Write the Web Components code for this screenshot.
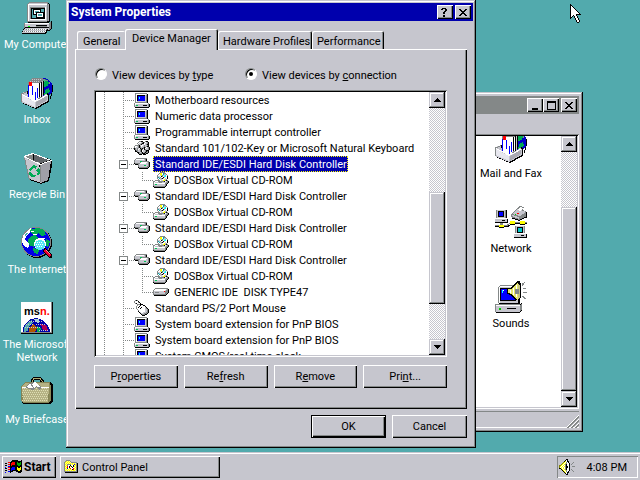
<!DOCTYPE html>
<html lang="en">
<head>
<meta charset="utf-8">
<title>Desktop</title>
<style>
:root{
  --face:#c6c6ce; --hi:#fff; --sh:#848888; --dk:#000; --navy:#0000ad; --teal:#52aaad;
  --raised:inset 1px 1px var(--hi),inset -1px -1px var(--dk),inset -2px -2px var(--sh);
  --frame:inset -1px -1px var(--dk),inset 1px 1px var(--face),inset -2px -2px var(--sh),inset 2px 2px var(--hi);
  --sunken:inset 1px 1px var(--sh),inset -1px -1px var(--hi),inset 2px 2px var(--dk),inset -2px -2px var(--face);
}
html,body{height:100%;margin:0}
body{font:11px/13px Roboto,"Liberation Sans",Arial,sans-serif;color:#000;overflow:hidden}
</style>
</head>
<body>
<desk-top>
  <desk-icons slot="icons">
    <desk-icon icon="mycomputer">My Computer</desk-icon>
    <desk-icon icon="inbox">Inbox</desk-icon>
    <desk-icon icon="bin">Recycle Bin</desk-icon>
    <desk-icon icon="internet">The Internet</desk-icon>
    <desk-icon icon="msn">The Microsoft Network</desk-icon>
    <desk-icon icon="briefcase">My Briefcase</desk-icon>
  </desk-icons>
  <folder-window slot="windows">
    <desk-icon icon="inbox">Mail and Fax</desk-icon>
    <desk-icon icon="network">Network</desk-icon>
    <desk-icon icon="sounds">Sounds</desk-icon>
  </folder-window>
  <props-dialog slot="windows" heading="System Properties">
    <tab-strip slot="tabs"></tab-strip>
    <view-choice></view-choice>
    <device-tree>
      <tree-item icon="pc">Motherboard resources</tree-item>
      <tree-item icon="pc">Numeric data processor</tree-item>
      <tree-item icon="pc">Programmable interrupt controller</tree-item>
      <tree-item icon="keys">Standard 101/102-Key or Microsoft Natural Keyboard</tree-item>
      <tree-item icon="drives" open selected>Standard IDE/ESDI Hard Disk Controller</tree-item>
      <tree-item icon="cd" child last>DOSBox Virtual CD-ROM</tree-item>
      <tree-item icon="drives" open>Standard IDE/ESDI Hard Disk Controller</tree-item>
      <tree-item icon="cd" child last>DOSBox Virtual CD-ROM</tree-item>
      <tree-item icon="drives" open>Standard IDE/ESDI Hard Disk Controller</tree-item>
      <tree-item icon="cd" child last>DOSBox Virtual CD-ROM</tree-item>
      <tree-item icon="drives" open>Standard IDE/ESDI Hard Disk Controller</tree-item>
      <tree-item icon="cd" child>DOSBox Virtual CD-ROM</tree-item>
      <tree-item icon="disk" child last>GENERIC IDE  DISK TYPE47</tree-item>
      <tree-item icon="mouse">Standard PS/2 Port Mouse</tree-item>
      <tree-item icon="pc">System board extension for PnP BIOS</tree-item>
      <tree-item icon="pc">System board extension for PnP BIOS</tree-item>
      <tree-item icon="pc">System CMOS/real time clock</tree-item>
    </device-tree>
    <button-row>
      <push-button>P<u>r</u>operties</push-button>
      <push-button>Re<u>f</u>resh</push-button>
      <push-button>R<u>e</u>move</push-button>
      <push-button>Pri<u>n</u>t...</push-button>
    </button-row>
    <push-button slot="actions" default>OK</push-button>
    <push-button slot="actions">Cancel</push-button>
  </props-dialog>
  <task-bar slot="taskbar"></task-bar>
  <px-icon slot="pointer" name="pointer" style="--w:12px;--h:19px"></px-icon>
</desk-top>

<script>
const r=(x,y,w,h,f)=>`<rect x="${x}" y="${y}" width="${w}" height="${h}" fill="${f}"/>`;
const p=(pts,f,s)=>`<polygon points="${pts}" fill="${f}"${s?` stroke="${s}"`:''}/>`;
const l=(d,s,w=1)=>`<path d="${d}" fill="none" stroke="${s}" stroke-width="${w}"/>`;
const dash=(d,s)=>`<path d="${d}" fill="none" stroke="${s}" stroke-dasharray="1 1"/>`;
const G='#848888',F='#c6c6ce',W='#fff',K='#000',B='#00f',N='#e7e7ef';
const land='#00aa55';

// Pixel grids: one character per pixel.
const INK={K:K,W:W,G:G,F:F,B:B,N:'#00008c',Y:'#ff0',P:'#ffff84',g:'#00c655',C:'#00ffff',R:'#f00',T:'#00aaad',O:'#848400'};
const grid=rows=>rows.map((row,y)=>[...row].map((c,x)=>INK[c]?r(x,y,1,1,INK[c]):'').join('')).join('');

const tray=`<circle cx="22" cy="11" r="10" fill="#0000c6"/>
${p('15,3 19,1 24,2 28,6 27,9 23,10 22,14 19,11 17,9',land)}${p('24,13 28,11 29,14 26,19 23,20',land)}
${p('19,3 24,2 25,4 21,6','#55aa88')}${l('M31.5 8V15M30.5 16V19M29.5 19V22','#000')}
${l('M19.5 2.5H24M25 3.5H27M28.5 5V7','#848888')}
${p('7,5 11,2 22,2 22,23 7,24',G)}${p('8,6 17,6 17,24 8,24',W)}
${p('11,1 22,1 19,6 7,6',G)}${dash('M9 4.5H19M11 2.5H21',F)}
${l('M11.5 18V9M14.5 23V15M16.5 21V11',B)}${r(8,5,3,4,'#f00')}${r(7,8,1,14,B)}
${l('M18.5 6V20M20.5 5V20M22.5 4V18',K)}${l('M17.5 6V21M19.5 6V20',W)}${l('M21.5 4V19',F)}
${p('1,16 7,14 7,20 15,25 27,16 28,18 28,25 15,32 1,26',K)}
${p('0,16 6,14 7,20 15,24 25,17 27,18 27,24 14,31 0,25',F)}
${p('1,18 14,25 14,30 1,24',N)}${p('15,25 26,19 26,23 15,30','#a8a8b0')}
${l('M1 17.5L14.5 24.5L26 18',W)}${l('M.5 16V25',G)}${l('M1 17L6 14.5',G)}`;

const ICONS={
pointer:{v:'0 0 12 19',s:grid(['K','KK','KWK','KWWK','KWWWK','KWWWWK','KWWWWWK','KWWWWWWK','KWWWWWWWK','KWWWWWWWWK','KWWWWWKKKKK','KWWKWWK','KWK KWWK','KK  KWWK','K    KWWK','     KWWK','      KWWK','      KWWK','       KK'])},
pc:{v:'0 0 16 16',s:grid(['',
' GGGGGGGGGGGG',' GWWWWWWWWWWFK',' GWKKKKKKKKFGK',' GWKBBBBBBBFGK',' GWKBCBBBBBFGK',' GWKBCBBBBBFGK',' GWKBBBBBBBFGK',' GWKBBBBBBBFGK',' GWFFFFFFFFFGK',' GGGGGGGGGGGGK','GWWWWWWWWWWWWWG','GWFFFFFFFFFFFFGK','GFggFFFFFKKKKFGK','GFFFFFFFFFFFFFGK',' KKKKKKKKKKKKKK'])},
keys:{v:'0 0 16 16',s:grid([
'','     GGKK  GKK','    GWWFGKGWFGK','   GWFFGKKWFFGK','    GFGKFFWFGKK',' GGGGKFWWFGFFGK','GWWFGKGWFFGFGKK','GWFFGKGFFGKGWFGK','KGFGFWKGKGKWFFGK','KGFGWFGKGWKGFFGK',' KGGFFGKWFFGKKK',' KKGFFGKWFFGKGK','   KKGFGKFGKGGK','    KGGGKKKGKK','     KKK KKK',''])},
drives:{v:'0 0 16 16',s:grid([
'','','  GGGGGGGGGGG',' GWWWWWWWWFGK','GFFFFFFFFFFGK','GFFFFFggGGGGGGG','GFFFFFGWWWWWWFGK','KGGGGGWWWWWWFFGK',' KKKGFFFFFFFFFGK','    GFFFFFggFFGK','    GFFFFFFFFGGK','    KGGGGGGGGGK','     KKKKKKKKK','','',''])},
cd:{v:'0 0 16 16',s:grid([
'       GGGGG','      GYYWTGG','     GWYYWTFFG','    GWWFYTFFCWG','    GFFWKGWCCWK','    GTFGWWKFWWK','    GWTFGKFWFWK','     GWFFWWYFG','  GGGGGWFFYYGKG','GGWWWGGGGGGKWFGK','GWFFFFGGGFFFFGGK','GWWWWWWWWWWWGGK','GFggFFFFFFFFGK','GFFFFFFFFFFFGK','KGGGGGGGGGGGK',' KKKKKKKKKKK'])},
disk:{v:'0 0 16 16',s:grid([
'','','','','  GGGGGGGGGGGGG',' GWWWWWWWWWWWFGK','GWWWWWWWWWWWFGGK','GFFFFFFFFFFRGGGK','GFGGGGFFFFFFGGGK','GFFFFFFFFFFFGGK','GGGGGGGGGGGGGK',' KKKKKKKKKKKK','','','',''])},
mouse:{v:'0 0 16 16',s:grid([
' GKG','G   K','G   GK',' GK   K','   GGGKKK','   GWWKWWKK','  GWWKWWWWWK','  GWKWWKWWWFK','  GWWWKWWWWFGK','   GWWWWWWWFFGK','    GWWWWWWFFGK','    KWWWWWWFFGK','     KFWWFFFGGK','      KFFFGGGK','       KGGGKK','        KKK'])},
folder:{v:'0 0 16 14',s:grid([
'  GGGG',' GYPYPG','GYPYPYPGGGGGG','GPYPYPYPYPYPGK','GYPGGGGPYPBYGK','GPYGWWKWWKPYGK','GYPRWKYKWKYPGK','GPYRWKWWKWPYGK','GYPBWYRWWRYPGK','GPYPYPYPKRPYGK','GYPYPYPYPYYPGK','GGGGGGGGGGGGGK',' KKKKKKKKKKKKK'])},
speaker:{v:'0 0 17 17',s:grid([
'       KK','      KWK','     KYWKK','    OYWGWK    G','   OYWYGWWK  G','  OYWYGKWWK G','OOYWYWGKWWK','OYWYWYGKKWK  GGG','OWYWYWGKKWK','KKYWYWGKWWK','  KYWYGKWWK G','   KYWYGWWK  G','    KYWGWK    G','     KYWKK','      KWK','       KK'])},
start:{v:'0 0 18 16',s:`${[4,6,9,11].map(y=>r(0,y,2,1,K)+r(3,y-1,2,1,'#f00')+r(0,y+2,1,1,B)+r(3,y+1,2,1,B)).join('')}
${p('5,3 8,1 12,1 14,2 17,1 17,13 14,14 12,13 9,12 5,14',K)}
${p('6,4 8,3 10,3 10,6 8,6 6,7','#f00')}${p('12,3 14,4 16,3 16,6 14,7 12,6','#00aa00')}
${p('6,9 8,8 10,8 10,11 8,11 6,12',B)}${p('12,8 14,9 16,8 16,11 14,12 12,11','#ff0')}`},
mycomputer:{v:'0 0 32 32',s:`${p('7,1 27,1 29,3 29,19 27,21 7,21',K)}${p('6,2 8,0 27,0 28,3 27,19 24,20 6,20',G)}
${p('7,2 26,2 26,19 7,19',F)}${l('M7 2.5H26M7.5 2V19',W)}${l('M8 .5H26',G)}${r(8,1,18,1,F)}${r(27,2,1,17,'#a8a8b0')}
${r(9,5,15,12,G)}${r(10,6,14,11,K)}${r(11,7,12,9,'#52aaad')}${r(12,7,8,6,K)}${r(13,8,6,4,W)}${r(14,9,4,2,'#52aaad')}${r(15,10,8,6,K)}${r(16,11,6,4,W)}${r(17,12,4,2,'#52aaad')}
${r(24,5,1,12,W)}${r(9,17,16,1,W)}
${p('5,21 28,21 31,19 31,26 28,29 4,29',K)}${r(3,21,1,7,G)}${r(4,21,24,7,F)}${r(4,21,24,1,W)}${p('28,21 30,19 30,26 28,28',G)}
${r(7,24,2,1,'#00ff00')}${r(15,23,11,1,K)}${r(15,24,11,1,G)}
${p('4,25 28,25 25,32 1,32 1,30',K)}${p('4,26 27,26 24,31 1,31',F)}
${r(5,27,21,1,W)}${dash('M5 27.5H26',G)}
${r(3,29,22,1,W)}${dash('M3 29.5H25',G)}${l('M1 31.5H24',K)}${l('M2 30.5H24',F)}`},
inbox:{v:'0 0 32 32',s:tray},
bin:{v:'0 0 32 32',s:`${p('3,4 12,1 31,8 31,13 28,29 20,32 8,28',K)}
${p('3,5 18,10 20,31 8,27',F)}${p('19,12 30,9 27,28 20,31','#a0a0a8')}
${p('3,4 12,1 12,8 8,8','#848888')}${p('12,1 29,8 20,11 12,9','#606468')}
${l('M3 4.5L19.5 12.5L30 8.5L12 1.5L3 4.5',W)}${l('M12.5 2V8',K)}${l('M3.5 6L8.5 28M19.5 13V30',G)}
${p('9,16 12,13 16,14 15,17 12,16 10,19 8,18','#00aa55')}${p('17,16 19,18 19,22 16,23 17,20 15,19','#00aa55')}${p('8,20 10,20 12,23 15,23 14,25 10,25 8,23','#00aa55')}`},
internet:{v:'0 0 32 32',s:`<circle cx="16" cy="16" r="15" fill="#000"/><circle cx="15" cy="15" r="15" fill="${G}"/><circle cx="15" cy="15" r="14" fill="#0000e7"/>
${p('2,8 8,2 10,1 9,5 5,9 4,13 9,16 7,21 2,18 1,14',W)}${p('4,7 6,5 7,7 4,9','#52aaad')}${p('10,2 18,1 23,3 25,8 20,9 18,6 12,8 9,5','#00aa55')}
${p('10,9 14,8 18,12 14,16 13,20 8,18 7,13','#00aa55')}${p('12,21 18,23 17,27 13,26','#00aa55')}${p('25,12 29,14 27,21 24,17','#00aa55')}
${l('M10 4.5H13M12 7.5H16M20 11.5H24',W)}${p('24,20 31,28 31,31 28,31 22,24','#000')}${p('24,22 30,28 28,30 23,25','#e70031')}${l('M25 23L29 27','#ff8c9c')}
<circle cx="19" cy="17" r="6" fill="#fff"/><circle cx="19" cy="18" r="5" fill="#55e7f7"/>${dash('M16 15.5H22M15 17.5H23M16 19.5H22','#fff')}`},
msn:{v:'0 0 32 32',s:`${r(0,0,32,32,K)}${r(0,0,31,31,G)}${r(0,0,30,30,W)}
<path d="M2 30V26L5 21L10 17L16 16L21 18L26 22L29 28V30Z" fill="#0000ad"/>${p('3,26 6,21 11,18 12,21 8,24 7,29 3,30','#52aaad')}
${p('13,17 18,17 19,20 16,21','#aad6d6')}${p('8,26 12,22 16,26 14,30 8,30','#ad5500')}${p('20,22 26,24 27,29 22,28','#ad0055')}${p('16,24 20,26 19,30 16,30','#00aa55')}
${dash('M5 22.5H12M8 19.5H22M4 25.5H20M15 22.5H25M18 28.5H28',F)}
<text x="3" y="13" font-family="Liberation Sans,Arial,sans-serif" font-weight="700" font-size="11" fill="#000">ms<tspan fill="#f00">n.</tspan></text>`},
briefcase:{v:'0 0 32 32',s:`${l('M11 6V4L13 1.5H19L21 4V7',K,3)}${l('M11 6V4L13 1.5H19L21 4V7','#adaa73',1)}
${p('1,9 4,5 29,5 32,8 32,24 29,27 2,27 1,25',K)}${p('0,10 4,5 29,5 29,24 27,26 2,26 0,24','#848455')}
${p('1,10 4,6 28,6 28,9 27,25 2,25','#b5b284')}${r(28,8,2,16,'#8c8a5a')}
${Array.from({length:7},(_,i)=>dash(`M${1+i%2} ${11.5+i*2}H27`,'#dedeb5')).join('')}
${p('4,10 8,6 13,5 21,10 18,13 15,10 12,13 8,12',G)}${p('5,10 9,6 12,11 8,11',W)}${p('11,7 14,5 20,10 17,10 15,9 13,11',W)}${l('M1 10.5H5M20 10.5H28',W)}`},
network:{v:'0 0 32 32',s:`
${r(1,4,11,9,K)}${r(1,3,10,9,G)}${r(2,4,8,8,F)}${r(1,3,10,1,W)}${r(3,5,6,6,K)}${r(4,6,4,4,'#0000ff')}${r(0,13,13,4,K)}${r(0,12,12,4,F)}${r(0,12,12,1,W)}${r(7,14,3,1,K)}
${p('16,8 22,2 25,0 29,1 28,4 32,6 31,11 24,14 16,11',G)}${p('17,8 22,3 31,6 25,10','#c6c6ce')}${p('22,4 25,1 28,2 26,5',W)}${p('17,9 24,11 24,13 17,10',F)}${p('25,11 31,7 31,10 25,13',G)}${l('M17 12L24 14.5L31.5 11V6',K)}${r(22,7,2,1,'#f00')}${r(20,8,1,1,'#0c0')}
${l('M0 20.5H13L17 17.5H32',K)}${l('M0 19.5H12L16 16.5H32',G)}
${r(5,17,3,2,G)}${r(4,19,5,2,'#ff0')}${r(4,21,5,1,K)}${r(15,15,5,3,'#ff0')}${r(15,18,5,1,K)}${r(25,15,5,3,'#ff0')}${r(25,18,5,1,K)}
${r(20,20,10,9,K)}${r(20,19,10,9,G)}${r(21,20,8,8,F)}${r(20,19,10,1,W)}${r(22,21,6,6,K)}${r(23,22,4,4,'#00c6c6')}${r(19,28,13,4,K)}${r(19,27,12,4,F)}${r(19,27,12,1,W)}${r(26,29,3,1,K)}`},
sounds:{v:'0 0 32 32',s:`${p('4,5 24,5 25,7 25,23 4,23',K)}${p('3,6 5,4 23,4 24,6 23,22 3,22',G)}${r(4,6,19,16,F)}${l('M4.5 6V22M5 5.5H22',W)}
${r(5,7,16,13,K)}${r(6,8,14,11,'#0000ff')}${r(7,9,1,3,'#00ffff')}${r(8,9,1,1,W)}
${p('1,24 24,24 27,21 27,29 24,32 1,32',K)}${r(0,23,25,8,G)}${r(1,24,24,7,F)}${r(1,24,24,1,W)}${p('25,24 27,22 27,28 25,30',G)}${r(4,27,2,2,'#0c0')}${r(12,27,9,1,K)}
${p('12,8 15,7 22,0 25,0 26,4 26,16 24,20 21,19 15,14 12,13',K)}${p('13,8 16,8 23,1 23,19 16,13 13,12','#e7e768')}${l('M15 9V12M18 7V14M21 4V16','#fff')}${p('23,2 25,5 25,16 23,19','#c6c384')}${r(20,8,4,5,G)}
${l('M27 5L30 1M28 7.5H31M28 11.5H32M27 15L31 18M27 4L28 2',G)}`},
help:{v:'0 0 8 9',s:grid([' KKKK','KK  KK','    KK','   KK','  KK','  KK','','  KK','  KK'])},
close:{v:'0 0 8 7',s:grid(['KK    KK',' KK  KK','  KKKK','   KK','  KKKK',' KK  KK','KK    KK'])},
min:{v:'0 0 9 9',s:r(1,7,6,2,K)},
max:{v:'0 0 9 9',s:r(0,0,9,9,K)+r(1,2,7,6,F)},
up:{v:'0 0 7 4',s:grid(['   K','  KKK',' KKKKK','KKKKKKK'])},
down:{v:'0 0 7 4',s:grid(['KKKKKKK',' KKKKK','  KKK','   K'])},
grip:{v:'0 0 13 13',s:[0,4,8].map(n=>l(`M${n} 13L13 ${n}`,W)+l(`M${n+1} 13.5L13.5 ${n+1}`,G,2)).join('')}
};

function define(name,html,setup){
  const t=document.createElement('template');
  t.innerHTML=`<style>*{box-sizing:border-box}button{font:inherit;color:inherit;border:0;padding:0;margin:0;background:none}u{text-underline-offset:1px}</style>`+html;
  customElements.define(name,class extends HTMLElement{
    constructor(){super();this.attachShadow({mode:'open'}).append(t.content.cloneNode(true))}
    connectedCallback(){setup&&setup(this,this.shadowRoot)}
  });
}

define('px-icon',`<style>:host{display:block;flex:none;width:var(--w);height:var(--h)}svg{display:block;width:100%;height:100%;overflow:hidden}</style>`,
(el,s)=>{const i=ICONS[el.getAttribute('name')];if(!i||s.querySelector('svg'))return;const t=document.createElement('template');
t.innerHTML=`<svg viewBox="${i.v}" shape-rendering="crispEdges" aria-hidden="true">${i.s}</svg>`;s.append(t.content)});

define('desk-icon',`<style>:host{display:block}button{display:flex;flex-direction:column;align-items:center;gap:4px;width:100%;text-align:center}
px-icon{--w:32px;--h:32px}</style><button type="button"><px-icon></px-icon><span><slot></slot></span></button>`,
(el,s)=>{const i=document.createElement('px-icon');i.setAttribute('name',el.getAttribute('icon'));s.querySelector('px-icon').replaceWith(i)});

define('desk-icons',`<style>:host{display:grid;grid-template-columns:74px;grid-auto-rows:75px;align-content:start;padding-top:2px;color:#fff}</style><slot></slot>`);

define('desk-top',`<style>:host{display:grid;grid-template-rows:1fr auto;height:100%;background:var(--teal);position:relative;overflow:hidden}
main{min-height:0}::slotted(px-icon){position:absolute;left:570px;top:4px}</style>
<main><slot name="icons"></slot><slot name="windows"></slot></main><slot name="taskbar"></slot><slot name="pointer"></slot>`);

define('title-bar',`<style>:host{display:flex;align-items:center;gap:2px;height:18px;padding:0 2px;background:var(--bar,var(--navy));color:#fff;font-size:12px;font-weight:700}
span{flex:1}button{display:grid;place-items:center;width:16px;height:14px;background:var(--face);box-shadow:var(--raised)}
div{display:flex}.a{--w:8px;--h:9px}.x{--w:8px;--h:7px}.m{--w:9px;--h:9px}:host([folder]) .help,:host(:not([folder])) .size{display:none}</style>
<span></span><button class="help" aria-label="Help"><px-icon class="a" name="help"></px-icon></button>
<div class="size"><button aria-label="Minimize"><px-icon class="m" name="min"></px-icon></button><button aria-label="Maximize"><px-icon class="m" name="max"></px-icon></button></div>
<button aria-label="Close"><px-icon class="x" name="close"></px-icon></button>`,
(el,s)=>{s.querySelector('span').textContent=el.getAttribute('heading')||''});

define('scroll-bar',`<style>:host{display:flex;flex-direction:column;flex:none;width:16px;background:conic-gradient(var(--face) 25%,#fff 0 50%,var(--face) 0 75%,#fff 0) 0 0/2px 2px}
button{display:grid;place-items:center;height:16px}button,.thumb{flex:none;background:var(--face);box-shadow:var(--frame)}
px-icon{--w:7px;--h:4px}.before{flex:var(--before)}.thumb{flex:var(--thumb)}.after{flex:var(--after)}</style>
<button aria-label="Scroll up"><px-icon name="up"></px-icon></button><div class="before"></div><div class="thumb"></div><div class="after"></div>
<button aria-label="Scroll down"><px-icon name="down"></px-icon></button>`);

define('folder-window',`<style>:host{position:absolute;left:183px;top:92px;width:400px;height:340px;display:flex;flex-direction:column;padding:4px;background:var(--face);box-shadow:var(--frame)}
:host{box-sizing:border-box}title-bar{--bar:var(--sh)}.menu{height:20px}
.view{flex:1;min-height:0;display:flex;padding:2px;background:#fff;box-shadow:var(--sunken)}
.items{flex:1;min-width:0;overflow:hidden;display:grid;grid-template-columns:76px;grid-auto-rows:75px;justify-content:end;padding-right:12px}
.items slot{display:block;margin-top:-5px}.items ::slotted(*){height:75px}
scroll-bar{--before:55;--thumb:183;--after:0}
.status{display:flex;justify-content:flex-end;align-items:flex-end;height:17px;margin-top:2px;box-shadow:inset 1px 1px var(--sh),inset 0 -1px #fff}px-icon{--w:13px;--h:13px}</style>
<title-bar folder></title-bar><div class="menu"></div>
<div class="view"><div class="items"><slot></slot></div><scroll-bar></scroll-bar></div>
<div class="status"><px-icon name="grip"></px-icon></div>`);

define('props-dialog',`<style>:host{position:absolute;left:66px;top:0;width:410px;box-sizing:border-box;padding:3px;background:var(--face);box-shadow:var(--frame)}
.body{padding:8px 6px 7px}.panel{display:flex;flex-direction:column;gap:8px;padding:17px 20px 21px 19px;box-shadow:var(--raised)}
.actions{display:flex;justify-content:flex-end;gap:6px;margin-top:6px}::slotted([slot=actions]){width:75px}</style>
<title-bar></title-bar><div class="body"><slot name="tabs"></slot><div class="panel"><slot></slot></div><div class="actions"><slot name="actions"></slot></div></div>`,
(el,s)=>{const t=document.createElement('title-bar');t.setAttribute('heading',el.getAttribute('heading'));s.querySelector('title-bar').replaceWith(t)});

define('tab-strip',`<style>:host{display:flex;align-items:flex-end;height:20px;padding-left:2px}
button{height:18px;padding:2px 4px 0 5px;text-align:left;white-space:nowrap;background:var(--face);border-radius:2px 2px 0 0;box-shadow:inset 1px 1px #fff,inset -1px 0 #000,inset -2px 0 var(--sh)}
.g{width:48px;padding-left:6px;box-shadow:inset 1px 1px #fff}.h{width:94px}.p{width:72px}
[aria-selected=true]{width:93px;height:21px;margin-bottom:-1px;padding:0 5px 2px 7px;position:relative}</style>
<button role="tab" class="g">General</button><button role="tab" aria-selected="true">Device Manager</button><button role="tab" class="h">Hardware Profiles</button><button role="tab" class="p">Performance</button>`);

define('view-choice',`<style>:host{display:grid;grid-template-columns:150px 1fr;height:16px;padding-left:1px}label{display:flex;align-items:center;gap:5px}
input{appearance:none;flex:none;display:grid;place-items:center;width:12px;height:12px;margin:0;border-radius:50%;background:#fff;border:1px solid;border-color:#848888 #fff #fff #848888;box-shadow:inset 1px 1px #000}
input:checked::before{content:"";width:4px;height:4px;border-radius:50%;background:#000}span{padding-top:2px}</style>
<label><input type="radio" name="v"><span>View devices by <u>t</u>ype</span></label><label><input type="radio" name="v" checked><span>View devices by <u>c</u>onnection</span></label>`);

define('device-tree',`<style>:host{display:flex;height:267px;box-sizing:border-box;padding:2px;background:#fff;box-shadow:var(--sunken)}
div{flex:1;overflow:hidden}scroll-bar{--before:84;--thumb:112;--after:35}</style><div role="tree"><slot></slot></div><scroll-bar></scroll-bar>`);

define('tree-item',`<style>:host{display:flex;height:16px;line-height:18px;--v:repeating-linear-gradient(to bottom,var(--sh) 0 1px,transparent 1px 2px);--x:repeating-linear-gradient(to right,var(--sh) 0 1px,transparent 1px 2px)}
i{flex:none;width:19px;background:var(--v) 8px 0/1px 100% no-repeat}
.b,.c{background:var(--v) 8px 0/1px 100% no-repeat,var(--x) 8px 8px/11px 1px no-repeat}
:host([child]) .b{background:var(--v) 8px 0/1px 100% no-repeat}
:host([last]) .c{background:var(--v) 8px 0/1px 8px no-repeat,var(--x) 8px 8px/11px 1px no-repeat}
:host(:not([child])) .c{display:none}
:host([open]) .b{display:grid;padding:4px 0 0 4px}
:host([open]) .b::before{content:"";width:9px;height:9px;background:linear-gradient(#000,#000) 50% 50%/5px 1px no-repeat,#fff;border:1px solid var(--sh);box-sizing:border-box}
px-icon{--w:16px;--h:16px;margin-right:3px}span{height:16px;padding:0 1px 0 2px;white-space:pre}
:host([selected]) span{background:var(--navy);color:#fff;outline:1px dotted #ff0;outline-offset:-1px}</style>
<i></i><i class="b"></i><i class="c"></i><px-icon></px-icon><span><slot></slot></span>`,
(el,s)=>{el.setAttribute('role','treeitem');const i=document.createElement('px-icon');i.setAttribute('name',el.getAttribute('icon'));s.querySelector('px-icon').replaceWith(i)});

define('button-row',`<style>:host{display:flex;gap:6px}::slotted(*){flex:1}</style><slot></slot>`);

define('push-button',`<style>:host{display:block}button{width:100%;height:23px;background:var(--face);box-shadow:var(--raised)}
:host([default]) button{border:1px solid #000}</style><button type="button"><slot></slot></button>`);

define('task-bar',`<style>:host{position:relative;display:flex;align-items:stretch;gap:4px;height:28px;box-sizing:border-box;padding:4px 2px 2px;background:var(--face);box-shadow:inset 0 1px var(--face),inset 0 2px #fff}
button{display:flex;align-items:center;box-shadow:var(--raised);padding:0 4px}.start{width:54px;gap:1px;font-weight:700;font-size:12px;padding:0 3px}
.task{width:160px;gap:2px}.tray{display:flex;align-items:center;gap:11px;margin-left:auto;padding:0 11px 0 2px;box-shadow:inset 1px 1px var(--sh),inset -1px -1px #fff}
.s{--w:18px;--h:16px}.f{--w:16px;--h:14px}.v{--w:17px;--h:17px}</style>
<button class="start"><px-icon class="s" name="start"></px-icon>Start</button>
<button class="task"><px-icon class="f" name="folder"></px-icon>Control Panel</button>
<div class="tray"><px-icon class="v" name="speaker"></px-icon><time>4:08 PM</time></div>`);
</script>
</body>
</html>
